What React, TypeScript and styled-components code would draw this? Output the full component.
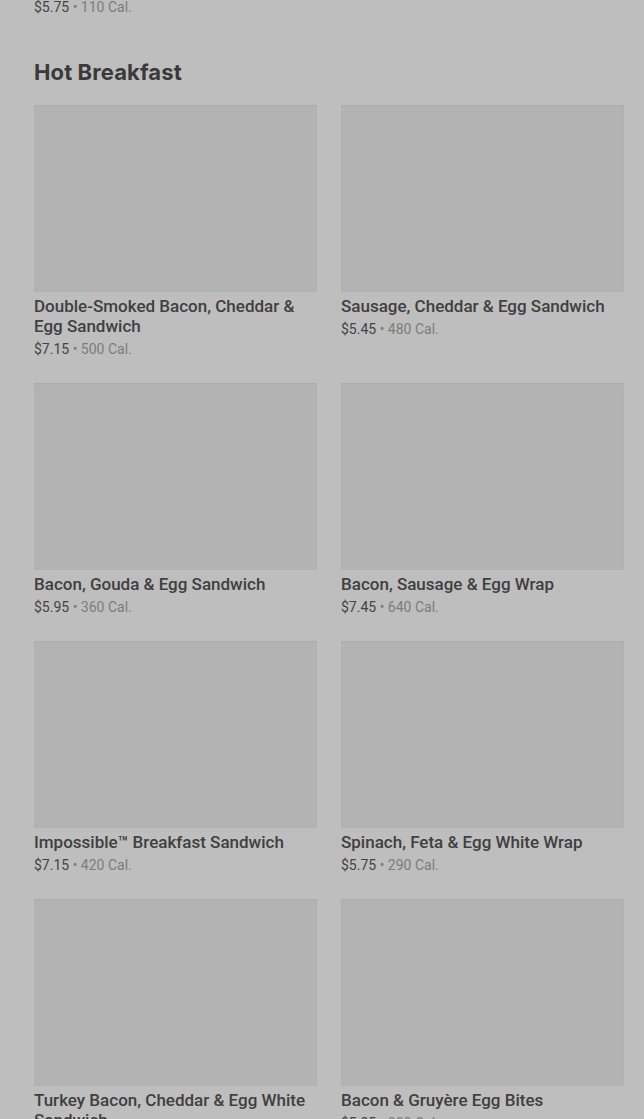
import React from "react";
import styled, { createGlobalStyle } from "styled-components";

const Global = createGlobalStyle`
  html, body { margin: 0; padding: 0; background: #bebebe; }
  body { font-family: Roboto, "Noto Sans", Arial, sans-serif; -webkit-font-smoothing: antialiased; }
  * { box-sizing: border-box; }
`;

const Page = styled.main`
  padding: 0 20px 0 34px;
  width: 644px;
  height: 1119px;
  overflow: hidden;
`;

const Meta = styled.div`
  font-size: 14px;
  line-height: 14px;
  color: #444;
  white-space: nowrap;
`;

const Cal = styled.span`
  color: #7c7c7c;
`;

const Heading = styled.h2`
  margin: 44px 0 19px;
  font-family: Inter, Roboto, sans-serif;
  font-weight: 700;
  font-size: 22px;
  line-height: 28px;
  letter-spacing: 0.1px;
  color: #3a3a3a;
`;

const Grid = styled.div`
  display: grid;
  grid-template-columns: 283px 283px;
  column-gap: 24px;
  row-gap: 25px;
`;

const Card = styled.div`
  display: flex;
  flex-direction: column;
`;

const Thumb = styled.div`
  height: 187px;
  background: #b3b3b3;
  box-shadow: inset 0 1px 2px rgba(0, 0, 0, 0.04);
`;

const Title = styled.div`
  margin-top: 4px;
  font-size: 17px;
  line-height: 20px;
  font-weight: 500;
  color: #404040;
`;

const Price = styled(Meta)`
  margin-top: 4px;
  line-height: 18px;
`;

const items = [
  ["Double-Smoked Bacon, Cheddar & Egg Sandwich", "$7.15", "500 Cal."],
  ["Sausage, Cheddar & Egg Sandwich", "$5.45", "480 Cal."],
  ["Bacon, Gouda & Egg Sandwich", "$5.95", "360 Cal."],
  ["Bacon, Sausage & Egg Wrap", "$7.45", "640 Cal."],
  ["Impossible™ Breakfast Sandwich", "$7.15", "420 Cal."],
  ["Spinach, Feta & Egg White Wrap", "$5.75", "290 Cal."],
  ["Turkey Bacon, Cheddar & Egg White Sandwich", "$5.25", "230 Cal."],
  ["Bacon & Gruyère Egg Bites", "$5.25", "300 Cal."],
];

export default function App() {
  return (
    <>
      <Global />
      <Page>
        <Meta>
          $5.75 <Cal>• 110 Cal.</Cal>
        </Meta>
        <Heading>Hot Breakfast</Heading>
        <Grid>
          {items.map(([t, p, c]) => (
            <Card key={t}>
              <Thumb />
              <Title>{t}</Title>
              <Price>
                {p} <Cal>• {c}</Cal>
              </Price>
            </Card>
          ))}
        </Grid>
      </Page>
    </>
  );
}
